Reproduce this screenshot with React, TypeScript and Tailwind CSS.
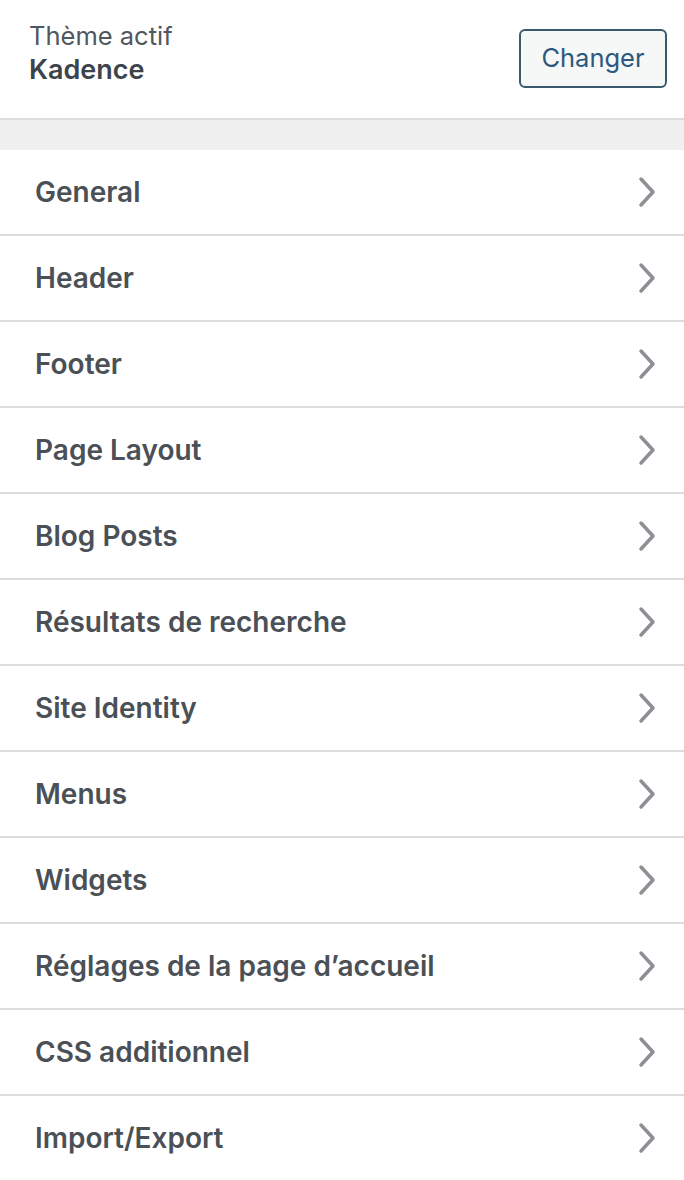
const SECTIONS = [
  'General',
  'Header',
  'Footer',
  'Page Layout',
  'Blog Posts',
  'Résultats de recherche',
  'Site Identity',
  'Menus',
  'Widgets',
  'Réglages de la page d’accueil',
  'CSS additionnel',
  'Import/Export',
];

function Chevron() {
  return (
    <svg width="18" height="32" viewBox="0 0 18 32" fill="none" className="shrink-0">
      <path d="M3 3 L15 16 L3 29" stroke="#8c8f94" strokeWidth="3.5" strokeLinecap="round" strokeLinejoin="round" />
    </svg>
  );
}

export default function App() {
  return (
    <div className="w-[684px] h-[1180px] overflow-hidden bg-white text-[#50575e]" style={{ fontFamily: 'Inter, "Liberation Sans", sans-serif' }}>
      <div className="h-[120px] flex items-start justify-between pl-[29px] pr-[17px] border-b-2 border-[#dcdcde]">
        <div className="pt-[20px]">
          <div className="text-[25.5px] leading-[31px] text-[#50575e]">Thème actif</div>
          <div className="text-[27px] leading-[38px] font-semibold text-[#3c434a]">Kadence</div>
        </div>
        <button className="mt-[29px] h-[59px] w-[148px] rounded-[6px] border-2 border-[#3c5a6e] bg-[#f6f7f7] text-[25.5px] text-[#2b5a7e]">
          Changer
        </button>
      </div>
      <div className="h-[30px] bg-[#f0f0f1]" />
      <div className="flex flex-col">
        {SECTIONS.map((title) => (
          <div
            key={title}
            className="h-[86px] shrink-0 flex items-center justify-between pl-[35px] pr-[28px] border-b-2 border-[#dcdcde]"
          >
            <span className="text-[28px] font-semibold text-[#4a5056]">{title}</span>
            <Chevron />
          </div>
        ))}
      </div>
    </div>
  );
}
